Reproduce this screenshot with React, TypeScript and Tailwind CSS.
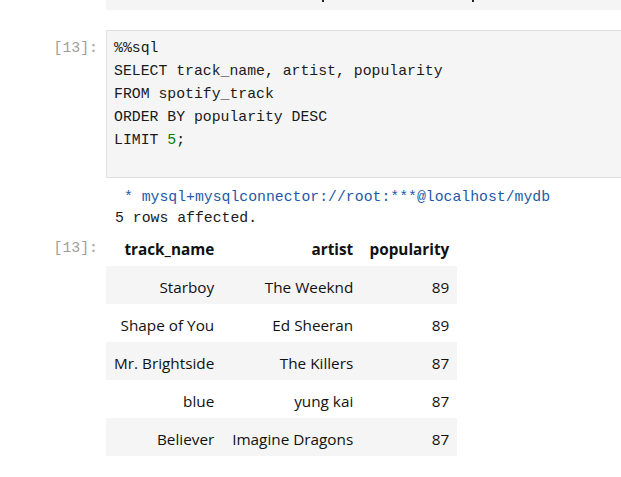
import React from "react";

const mono = { fontFamily: '"Liberation Mono", "DejaVu Sans Mono", monospace' };
const sans = { fontFamily: '"Open Sans", "Noto Sans", sans-serif' };

const rows = [
  ["Starboy", "The Weeknd", "89"],
  ["Shape of You", "Ed Sheeran", "89"],
  ["Mr. Brightside", "The Killers", "87"],
  ["blue", "yung kai", "87"],
  ["Believer", "Imagine Dragons", "87"],
];

function Prompt({ className = "" }: { className?: string }) {
  return (
    <div
      className={`w-[106px] shrink-0 pr-[8px] text-right text-[14.8px] text-[#9e9e9e] ${className}`}
      style={mono}
    >
      [13]:
    </div>
  );
}

export default function App() {
  return (
    <div className="w-[621px] h-[477px] overflow-hidden bg-white relative">
      {/* previous cell remnant */}
      <div className="ml-[106px] h-[10px] bg-[#f5f5f5] relative overflow-hidden">
        <div className="absolute left-[216px] top-0 w-[2px] h-[2px] bg-[#222]" />
        <div className="absolute left-[366px] top-0 w-[2px] h-[2px] bg-[#222]" />
      </div>

      {/* code cell */}
      <div className="flex mt-[20px]">
        <Prompt className="pt-[7px] leading-[23px]" />
        <div
          className="flex-1 h-[148px] border border-r-0 border-[#e0e0e0] bg-[#f5f5f5] pl-[7px] pt-[6px] text-[14.8px] leading-[23px] text-[#1a1a1a] whitespace-pre"
          style={mono}
        >
          <div>%%sql</div>
          <div>SELECT track_name, artist, popularity</div>
          <div>FROM spotify_track</div>
          <div>ORDER BY popularity DESC</div>
          <div>
            LIMIT <span className="text-[#008000]">5</span>;
          </div>
        </div>
      </div>

      {/* output text */}
      <div
        className="ml-[115px] mt-[9px] text-[14.8px] leading-[21px] whitespace-pre"
        style={mono}
      >
        <div className="text-[#1d5aa6]"> * mysql+mysqlconnector://root:***@localhost/mydb</div>
        <div className="text-[#1a1a1a]">5 rows affected.</div>
      </div>

      {/* table output */}
      <div className="flex mt-[3px]">
        <Prompt className="pt-[6px] leading-[20px]" />
        <table
          className="border-collapse text-[15.3px] text-[#111]"
          style={sans}
        >
          <thead>
            <tr className="h-[34px]">
              <th className="w-[116px] px-[8px] text-right font-bold">track_name</th>
              <th className="w-[139px] px-[8px] text-right font-bold">artist</th>
              <th className="w-[96px] px-[8px] text-right font-bold">popularity</th>
            </tr>
          </thead>
          <tbody>
            {rows.map((r, i) => (
              <tr key={i} className={`h-[38px] ${i % 2 === 0 ? "bg-[#f5f5f5]" : "bg-white"}`}>
                <td className="px-[8px] pt-[4px] pb-0 text-right whitespace-nowrap">{r[0]}</td>
                <td className="px-[8px] pt-[4px] pb-0 text-right whitespace-nowrap">{r[1]}</td>
                <td className="px-[8px] pt-[4px] pb-0 text-right whitespace-nowrap">{r[2]}</td>
              </tr>
            ))}
          </tbody>
        </table>
      </div>
    </div>
  );
}
